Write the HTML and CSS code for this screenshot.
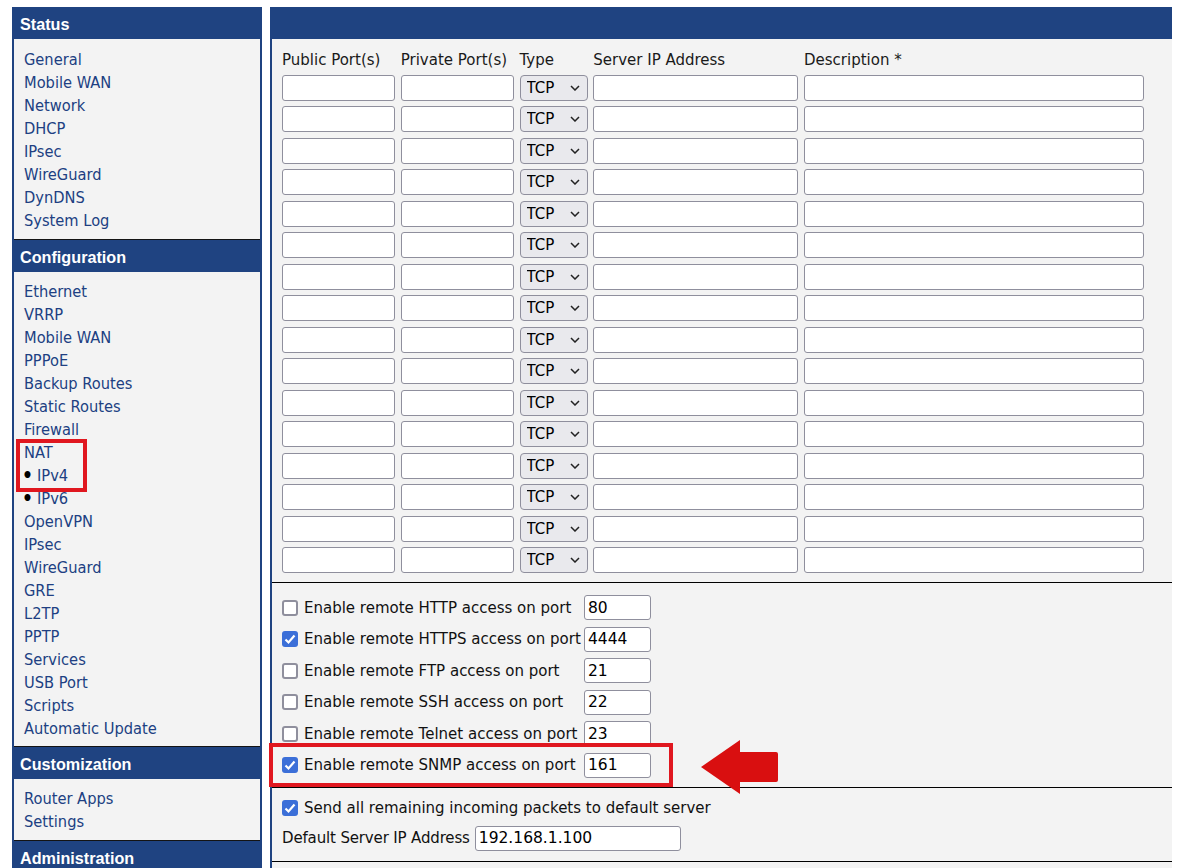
FILE: index.html
```html
<!DOCTYPE html>
<html>
<head>
<meta charset="utf-8">
<link rel="stylesheet" href="styles.css">
</head>
<body>
<div class="page">
  <nav class="sidebar">
    <div class="sec-head first">Status</div>
    <ul class="links status">
      <li>General</li><li>Mobile WAN</li><li>Network</li><li>DHCP</li><li>IPsec</li><li>WireGuard</li><li>DynDNS</li><li>System Log</li>
    </ul>
    <div class="sec-head">Configuration</div>
    <ul class="links config">
      <li>Ethernet</li><li>VRRP</li><li>Mobile WAN</li><li>PPPoE</li><li>Backup Routes</li><li>Static Routes</li><li>Firewall</li><li>NAT</li>
      <li class="sub"><span class="dot">•</span>IPv4</li><li class="sub"><span class="dot">•</span>IPv6</li>
      <li>OpenVPN</li><li>IPsec</li><li>WireGuard</li><li>GRE</li><li>L2TP</li><li>PPTP</li><li>Services</li><li>USB Port</li><li>Scripts</li><li>Automatic Update</li>
    </ul>
    <div class="sec-head">Customization</div>
    <ul class="links">
      <li>Router Apps</li><li>Settings</li>
    </ul>
    <div class="sec-head">Administration</div>
    <ul class="links">
      <li>Users</li><li>Change Profile</li>
    </ul>
    <div class="mark nat-mark"></div>
  </nav>

  <main class="panel">
    <div class="panel-head"></div>
    <section class="rules">
      <div class="grid">
        <div class="lbl">Public Port(s)</div>
        <div class="lbl">Private Port(s)</div>
        <div class="lbl">Type</div>
        <div class="lbl">Server IP Address</div>
        <div class="lbl">Description *</div>
      </div>
      <div class="grid rows" id="rows"></div>
    </section>

    <section class="access">
      <div class="acc-row"><label class="chk"><input type="checkbox"><span>Enable remote HTTP access on port</span></label><input class="port" type="text" value="80"></div>
      <div class="acc-row"><label class="chk"><input type="checkbox" checked><span>Enable remote HTTPS access on port</span></label><input class="port" type="text" value="4444"></div>
      <div class="acc-row"><label class="chk"><input type="checkbox"><span>Enable remote FTP access on port</span></label><input class="port" type="text" value="21"></div>
      <div class="acc-row"><label class="chk"><input type="checkbox"><span>Enable remote SSH access on port</span></label><input class="port" type="text" value="22"></div>
      <div class="acc-row"><label class="chk"><input type="checkbox"><span>Enable remote Telnet access on port</span></label><input class="port" type="text" value="23"></div>
      <div class="acc-row"><label class="chk"><input type="checkbox" checked><span>Enable remote SNMP access on port</span></label><input class="port" type="text" value="161"></div>
    </section>

    <section class="defsrv">
      <label class="chk"><input type="checkbox" checked><span>Send all remaining incoming packets to default server</span></label>
      <div class="ip-row"><span class="ip-lbl">Default Server IP Address</span><input class="ip" type="text" value="192.168.1.100"></div>
    </section>
    <section class="more"></section>

    <div class="mark snmp-mark"></div>
    <svg class="arrow" width="80" height="58" viewBox="700 738 80 58">
      <path d="M701 767 L740 740 L740 752 L776 752 Q778 752 778 754 L778 780 Q778 782 776 782 L740 782 L740 794 Z" fill="#d90f10"/>
    </svg>
  </main>
</div>
<script src="app.js"></script>
</body>
</html>
```

FILE: app.js
```js
(function () {
  var rows = document.getElementById('rows');
  var html = '';
  for (var i = 0; i < 16; i++) {
    html += '<input type="text" class="in">' +
            '<input type="text" class="in">' +
            '<div class="sel"><select><option>TCP</option><option>UDP</option></select>' +
            '<svg class="chev" width="10" height="6" viewBox="0 0 10 6"><path d="M1 1 L5 5 L9 1" fill="none" stroke="#222" stroke-width="1.5"/></svg></div>' +
            '<input type="text" class="in">' +
            '<input type="text" class="in">';
  }
  rows.innerHTML = html;
})();
```

FILE: styles.css
```css
* { box-sizing: border-box; }
html, body { margin: 0; padding: 0; background: #fff; overflow: hidden; }
body { font-family: "DejaVu Sans", Verdana, sans-serif; font-size: 15px; color: #111; }

.page {
  display: flex;
  align-items: flex-start;
  gap: 8px;
  padding: 7px 0 0 12px;
  height: 868px;
}

/* Sidebar */
.sidebar {
  position: relative;
  width: 250px;
  flex: none;
  background: #f3f3f3;
  border-left: 2px solid #1f4381;
  border-right: 2px solid #1f4381;
}
.sec-head {
  height: 33px;
  line-height: 34px;
  border-top: 1px solid #141414;
  background: #1f4381;
  color: #fff;
  font-family: "Liberation Sans", Arial, sans-serif;
  font-weight: bold;
  font-size: 16.2px;
  padding-left: 6px;
}
.sec-head.first { height: 32px; border-top: 0; line-height: 34px; }
.links {
  list-style: none;
  margin: 0;
  padding: 8px 0 7px 10px;
  font-family: "DejaVu Sans Condensed", "DejaVu Sans", sans-serif;
  font-size: 16.3px;
  color: #203f82;
}
.links.status { padding-top: 9px; padding-bottom: 7px; }
.links.config { padding-top: 8px; padding-bottom: 6px; }
.links li { white-space: nowrap; height: 23px; line-height: 23px; }
.dot { color: #000; display: inline-block; width: 15px; margin-left: -2px; font-size: 19px; line-height: 23px; vertical-align: top; font-weight: bold; }

.mark {
  position: absolute;
  border: 4px solid #e0171f;
}
.nat-mark { left: 2px; top: 432px; width: 71px; height: 53px; }

/* Main panel */
.panel {
  position: relative;
  width: 902px;
  flex: none;
  background: #f3f3f3;
  border-left: 2px solid #1f4381;
  height: 900px;
}
.panel-head { height: 32px; background: #1f4381; margin-left: -2px; }

.rules { padding: 11px 26px 9px 10px; }
.grid {
  display: grid;
  grid-template-columns: 113px 113px 68px 205px 340px;
  column-gap: 5.75px;
}
.lbl { height: 20px; line-height: 20px; white-space: nowrap; color: #1a1a1a; }
.rows { margin-top: 5px; row-gap: 5.47px; }

input[type="text"] {
  font-family: "DejaVu Sans", sans-serif;
  font-size: 15.5px;
  color: #000;
  background: #fff;
  border: 1px solid #8f8f9d;
  border-radius: 3px;
  padding: 0 3px;
  margin: 0;
  outline: none;
}
.in { width: 100%; height: 26px; }

.sel { position: relative; height: 26px; }
.sel select {
  -webkit-appearance: none;
  appearance: none;
  width: 100%;
  height: 26px;
  margin: 0;
  padding: 0 0 0 6px;
  background: #e9e9ed;
  border: 1px solid #8f8f9d;
  border-radius: 4px;
  font-family: "DejaVu Sans", sans-serif;
  font-size: 15px;
  color: #000;
}
.chev { position: absolute; left: 50px; top: 10px; pointer-events: none; }

.access {
  border-top: 1px solid #000;
  padding: 12px 10px 9px;
  display: flex;
  flex-direction: column;
  gap: 6.5px;
}
.acc-row {
  display: grid;
  grid-template-columns: 302px 67px;
  height: 25px;
  align-items: center;
}
.port { width: 67px; height: 25px; }

.chk { display: flex; align-items: center; gap: 6px; white-space: nowrap; }
.chk input {
  -webkit-appearance: none;
  appearance: none;
  width: 16px;
  height: 16px;
  margin: 0;
  flex: none;
  border: 2px solid #8f8f9d;
  border-radius: 3px;
  background: #fff;
}
.chk input:checked {
  border: 0;
  background: #3b6fd8 url("data:image/svg+xml;utf8,<svg xmlns='http://www.w3.org/2000/svg' width='16' height='16'><path d='M3.5 8.5 L6.5 11.5 L12.5 4.5' fill='none' stroke='white' stroke-width='2.2'/></svg>") no-repeat center;
}

.defsrv {
  border-top: 1px solid #000;
  padding: 8px 10px 10px;
  display: flex;
  flex-direction: column;
  gap: 6px;
}
.defsrv .chk { height: 24px; }
.ip-row { display: flex; align-items: center; gap: 5px; height: 25px; white-space: nowrap; }
.ip-lbl { letter-spacing: -0.15px; }
.ip { width: 206px; height: 25px; }
.more { border-top: 1px solid #000; height: 40px; }

.snmp-mark { left: -3px; top: 736px; width: 404px; height: 44px; }
.arrow { position: absolute; left: 428px; top: 731px; }
```
